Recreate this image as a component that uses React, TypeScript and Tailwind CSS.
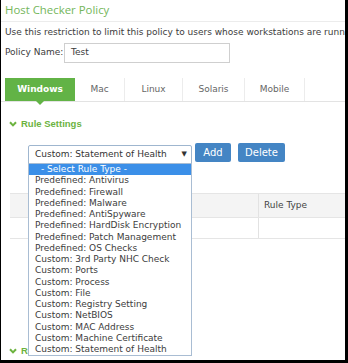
import React from "react";

const items = [
  "- Select Rule Type -",
  "Predefined: Antivirus",
  "Predefined: Firewall",
  "Predefined: Malware",
  "Predefined: AntiSpyware",
  "Predefined: HardDisk Encryption",
  "Predefined: Patch Management",
  "Predefined: OS Checks",
  "Custom: 3rd Party NHC Check",
  "Custom: Ports",
  "Custom: Process",
  "Custom: File",
  "Custom: Registry Setting",
  "Custom: NetBIOS",
  "Custom: MAC Address",
  "Custom: Machine Certificate",
  "Custom: Statement of Health",
];

function Chevron() {
  return (
    <svg width="8" height="6" viewBox="0 0 8 6" className="shrink-0">
      <path d="M1 1.2 L4 4.4 L7 1.2" stroke="#6cb33f" strokeWidth="2" fill="none" />
    </svg>
  );
}

export default function App() {
  const tabs = [
    { label: "Mac", w: "w-[50px]" },
    { label: "Linux", w: "w-[58px]" },
    { label: "Solaris", w: "w-[62px]" },
    { label: "Mobile", w: "w-[60px]" },
  ];
  return (
    <div
      className="relative w-[348px] h-[363px] overflow-hidden bg-white border-l border-r-[3px] border-b-[3px] border-black text-[#444]"
      style={{ fontFamily: '"DejaVu Sans", Verdana, sans-serif' }}
    >
      <div
        className="pl-1 pt-[2px] pb-[3px] border-b border-[#ececec] text-[11.4px] leading-[16px] h-[22px] text-[#74b65a] whitespace-nowrap"
        style={{ fontFamily: '"Open Sans", sans-serif' }}
      >
        Host Checker Policy
      </div>
      <div className="pl-1 mt-[4px] h-[12px] text-[9px] leading-[12px] whitespace-nowrap text-[#3c3c3c]">
        Use this restriction to limit this policy to users whose workstations are running
      </div>
      <div className="flex items-center pl-1 mt-[5px] h-[20px] text-[9px] text-[#3c3c3c]">
        <span className="w-[59px] whitespace-nowrap">Policy Name:</span>
        <div className="w-[166px] h-[20px] border border-[#cfcfcf] bg-white flex items-center pl-[6px] text-[9px]">
          Test
        </div>
      </div>

      <div className="mt-[15px] flex pl-1 border-b border-[#e3e3e3] h-[24px] text-[9px]">
        <div className="relative w-[70px] bg-[#62b346] text-white font-bold flex items-center justify-center">
          Windows
          <div className="absolute left-[31px] top-full w-0 h-0 border-l-[4px] border-r-[4px] border-t-[4px] border-l-transparent border-r-transparent border-t-[#62b346]" />
        </div>
        {tabs.map((t) => (
          <div
            key={t.label}
            className={`${t.w} border-r border-[#ececec] flex items-center justify-center text-[#666]`}
          >
            {t.label}
          </div>
        ))}
      </div>

      <div
        className="flex items-center gap-[4px] pl-[8px] mt-[16px] h-[12px] text-[9.5px] font-bold text-[#6cb33f]"
        style={{ fontFamily: '"Liberation Sans", Arial, sans-serif' }}
      >
        <Chevron />
        <span>Rule Settings</span>
      </div>

      <div className="flex items-start pl-[27px] mt-[13px] h-[21px] text-[9px]">
        <div className="w-[164px] h-[19px] mt-[2px] border border-[#9fb6cf] rounded-t-[2px] flex items-center justify-between pl-[6px] pr-[4px] text-[#333]">
          <span>Custom: Statement of Health</span>
          <span className="text-[7px]">▼</span>
        </div>
        <div className="ml-[3px] w-[36px] h-[19px] bg-[#4485c4] rounded-[2px] text-white text-[10px] flex items-center justify-center">
          Add
        </div>
        <div className="ml-[7px] w-[47px] h-[19px] bg-[#4485c4] rounded-[2px] text-white text-[10px] flex items-center justify-center">
          Delete
        </div>
      </div>

      <div className="ml-[9px] mt-[29px] text-[9px]">
        <div className="flex h-[25px] bg-[#f4f4f4] border-y border-[#e5e5e5]">
          <div className="w-[249px] border-r border-[#e2e2e2]" />
          <div className="flex-1 flex items-center pl-[5px] text-[#444]">Rule Type</div>
        </div>
        <div className="flex h-[21px] border-b border-[#e5e5e5]">
          <div className="w-[249px] border-r border-[#e2e2e2]" />
          <div className="flex-1" />
        </div>
      </div>

      <div
        className="flex items-center gap-[4px] pl-[8px] mt-[106px] h-[12px] text-[9.5px] font-bold text-[#6cb33f]"
        style={{ fontFamily: '"Liberation Sans", Arial, sans-serif' }}
      >
        <Chevron />
        <span>Remediation</span>
      </div>

      <div className="absolute left-[27px] top-[163px] w-[164px] bg-white border border-[#a9bdd3] text-[9px] text-[#3c3c3c]">
        {items.map((it, i) => (
          <div
            key={it}
            className={`h-[11.25px] leading-[11.25px] pl-[6px] whitespace-nowrap ${
              i === 0 ? "bg-[#3b8fe8] text-white pl-[12px]" : ""
            }`}
          >
            {it}
          </div>
        ))}
      </div>
    </div>
  );
}
